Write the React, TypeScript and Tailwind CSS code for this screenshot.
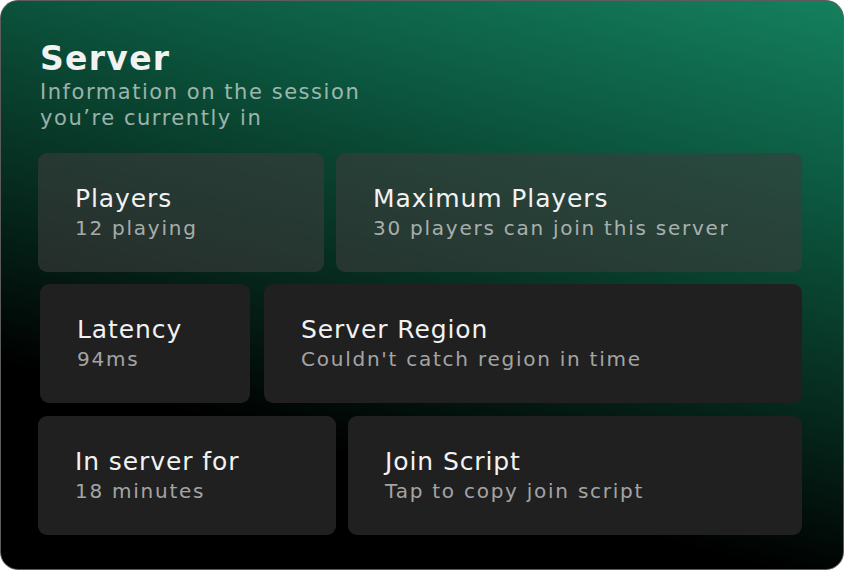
import React from 'react';

type Item = { title: string; value: string };

const Card: React.FC<{ item: Item; className: string }> = ({ item, className }) => (
  <div className={`h-[119px] rounded-[9px] flex flex-col justify-center pl-[37px] ${className}`}>
    <div className="text-[25px] leading-[30px] text-[#f2f2f2] tracking-[0.9px]">{item.title}</div>
    <div className="text-[20px] leading-[28px] text-white/60 tracking-[1.75px]">{item.value}</div>
  </div>
);

export default function App() {
  return (
    <div className="w-[844px] h-[570px] bg-white">
      <div
        className="w-[844px] h-[570px] rounded-[18px] border border-[#5c5c5c] overflow-hidden bg-[linear-gradient(195deg,#14805d_0%,#0c5840_25%,#062a1d_52%,#000_74%)] pl-[37px] pr-[41px] pt-[38px]"
        style={{ fontFamily: '"DejaVu Sans", "Noto Sans", sans-serif' }}
      >
        <div className="pl-[2px]">
          <h1 className="text-[33px] leading-[40px] font-bold text-[#f2f2f2] tracking-[1.3px]">Server</h1>
          <p className="text-[21px] leading-[26px] text-white/60 tracking-[1.55px]">
            Information on the session
            <br />
            you’re currently in
          </p>
        </div>

        <div className="mt-[22px] flex flex-col">
          <div className="flex gap-[12px]">
            <Card item={{ title: 'Players', value: '12 playing' }} className="w-[286px] bg-[#3c3c3c]/60" />
            <Card item={{ title: 'Maximum Players', value: '30 players can join this server' }} className="flex-1 bg-[#3c3c3c]/60" />
          </div>
          <div className="flex gap-[14px] pl-[2px] mt-[12px]">
            <Card item={{ title: 'Latency', value: '94ms' }} className="w-[210px] bg-[#202020]" />
            <Card item={{ title: 'Server Region', value: "Couldn't catch region in time" }} className="flex-1 bg-[#202020]" />
          </div>
          <div className="flex gap-[12px] mt-[13px]">
            <Card item={{ title: 'In server for', value: '18 minutes' }} className="w-[298px] bg-[#202020]" />
            <Card item={{ title: 'Join Script', value: 'Tap to copy join script' }} className="flex-1 bg-[#202020]" />
          </div>
        </div>
      </div>
    </div>
  );
}
